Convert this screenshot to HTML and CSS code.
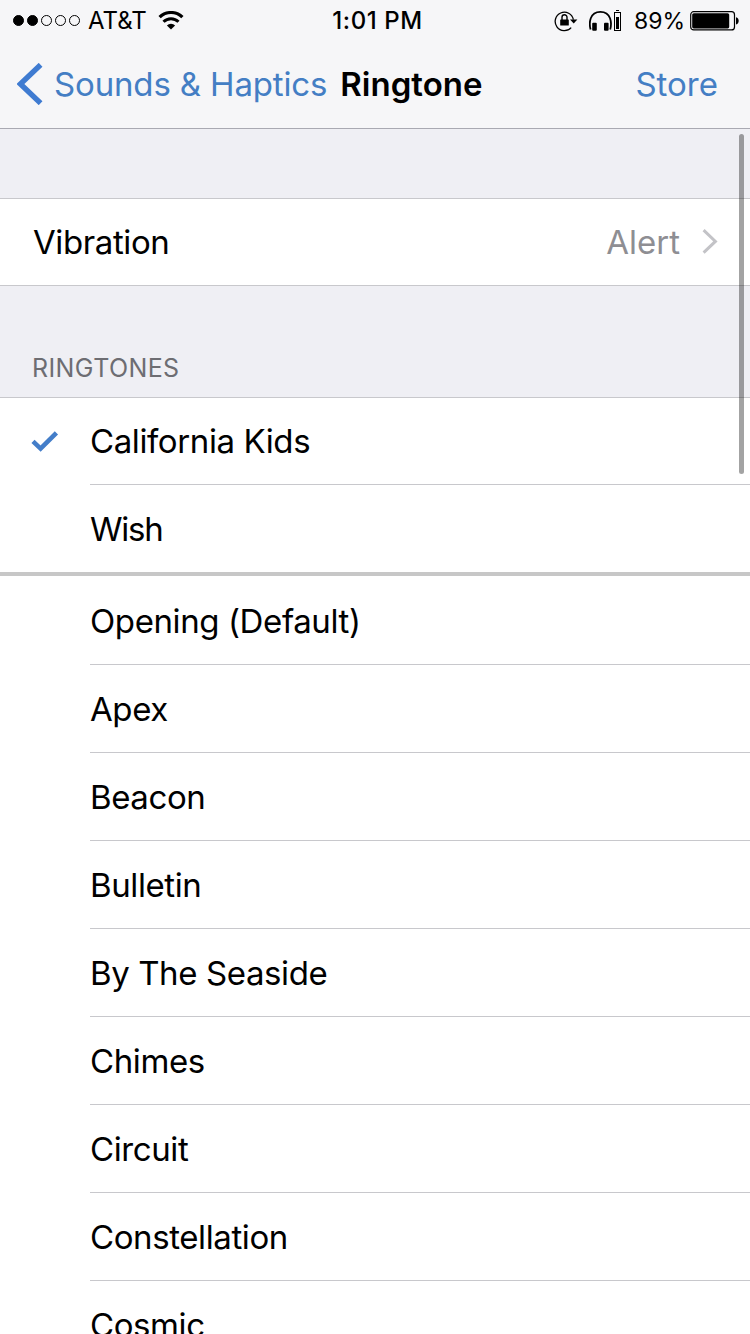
FILE: index.html
```html
<!DOCTYPE html>
<html lang="en">
<head>
  <meta charset="UTF-8">
  <meta name="viewport" content="width=device-width, initial-scale=1.0">
  <title>Ringtone</title>
  <link rel="stylesheet" href="styles.css">
</head>
<body>

  <header class="header">
    <div class="status-bar">
      <div class="status-left">
        <div class="signal">
          <span class="dot full"></span>
          <span class="dot full"></span>
          <span class="dot"></span>
          <span class="dot"></span>
          <span class="dot"></span>
        </div>
        <span class="carrier">AT&amp;T</span>
        <svg class="wifi" width="26" height="20" viewBox="0 0 26 20">
          <path d="M1.6 6.2 A16.2 16.2 0 0 1 24.4 6.2" fill="none" stroke="#000" stroke-width="3.2"/>
          <path d="M5.5 10.8 A10.6 10.6 0 0 1 20.5 10.8" fill="none" stroke="#000" stroke-width="3"/>
          <path d="M13 18.6 L8.9 14.5 A5.8 5.8 0 0 1 17.1 14.5 Z"/>
        </svg>
      </div>
      <span class="time">1:01 PM</span>
      <div class="status-right">
        <svg class="lock" width="24" height="22" viewBox="0 0 24 22">
          <path d="M17.2 17.6 A9.2 9.2 0 1 1 19.4 9.6" fill="none" stroke="#000" stroke-width="1.3"/>
          <path d="M16 9.4 H23.4 L19.7 13.4 Z"/>
          <rect x="6.2" y="9.4" width="8.6" height="6.2" rx="0.6"/>
          <path d="M8 10 V7.2 A2.5 2.5 0 0 1 13 7.2 V10" fill="none" stroke="#000" stroke-width="1.4"/>
        </svg>
        <svg class="headphones" width="34" height="22" viewBox="0 0 34 22">
          <path d="M1.6 19.5 C-0.2 13 0.6 1.8 11.4 1.8 C22.2 1.8 23 13 21.2 19.5" fill="none" stroke="#000" stroke-width="1.8"/>
          <rect x="3.2" y="12.8" width="4.6" height="8" rx="1"/>
          <rect x="15" y="12.8" width="4.6" height="8" rx="1"/>
          <rect x="25.5" y="2.5" width="6" height="18" fill="none" stroke="#000"/>
          <rect x="27" y="0" width="3" height="1"/>
          <rect x="27" y="7" width="3" height="12"/>
        </svg>
        <span class="percent">89%</span>
        <svg class="battery" width="50" height="20" viewBox="0 0 50 20">
          <rect x="0.7" y="0.7" width="43.8" height="18.2" rx="3" fill="none" stroke="#000" stroke-width="1.2"/>
          <rect x="2.2" y="2.2" width="37" height="15.2" rx="1.6"/>
          <path d="M46 6.2 C49.6 6.8 49.6 12.8 46 13.4 Z"/>
        </svg>
      </div>
    </div>

    <nav class="nav-bar">
      <a href="#" class="back">
        <svg width="26" height="42" viewBox="0 0 26 42">
          <path d="M23.6 1.8 L3.4 21 L23.6 40.2" fill="none" stroke="#3f7bd1" stroke-width="5.4"/>
        </svg>
        <span class="back-label">Sounds &amp; Haptics</span>
      </a>
      <h1 class="title">Ringtone</h1>
      <a href="#" class="store">Store</a>
    </nav>
  </header>

  <main class="settings">
    <div class="row-link">
      <span class="vibration">Vibration</span>
      <span class="value">Alert</span>
      <svg width="16" height="26" viewBox="0 0 16 26">
        <path d="M1.6 1.2 L13.4 12.4 L1.6 23.6" fill="none" stroke="#c3c3c7" stroke-width="3"/>
      </svg>
    </div>

    <h2 class="section-title">RINGTONES</h2>

    <ul class="list purchased">
      <li class="item">
        <svg class="check" width="28" height="22" viewBox="0 0 28 22">
          <path d="M2 10.4 L9.6 17.6 L25.4 1.8" fill="none" stroke="#447ec9" stroke-width="4.6"/>
        </svg>
        <span class="name">California Kids</span>
      </li>
      <li class="item"><span class="name wish">Wish</span></li>
    </ul>

    <ul class="list">
      <li class="item"><span class="name">Opening (Default)</span></li>
      <li class="item"><span class="name">Apex</span></li>
      <li class="item"><span class="name">Beacon</span></li>
      <li class="item"><span class="name">Bulletin</span></li>
      <li class="item"><span class="name">By The Seaside</span></li>
      <li class="item"><span class="name">Chimes</span></li>
      <li class="item"><span class="name">Circuit</span></li>
      <li class="item"><span class="name">Constellation</span></li>
      <li class="item"><span class="name">Cosmic</span></li>
    </ul>
  </main>

  <div class="scrollbar"></div>

</body>
</html>
```

FILE: styles.css
```css
* {
  box-sizing: border-box;
}

body {
  margin: 0;
  height: 1334px;
  overflow: hidden;
  position: relative;
  font-family: Inter, "Liberation Sans", sans-serif;
  font-size: 33px;
  color: #000;
  background-color: #efeff4;
}

a {
  text-decoration: none;
  color: #447ec4;
}

/* Header */
.header {
  height: 129px;
  background-color: #f6f6f8;
  border-bottom: 1px solid #a9a9b2;
}

.status-bar {
  display: grid;
  grid-template-columns: 1fr auto 1fr;
  align-items: center;
  height: 40px;
  padding: 1px 10px 0 13px;
  font-size: 23px;
}

.status-left,
.status-right,
.signal {
  display: flex;
  align-items: center;
}

.signal {
  gap: 3px;
}

.dot {
  width: 11px;
  height: 11px;
  border: 1px solid #000;
  border-radius: 50%;
}

.dot.full {
  background-color: #000;
}

.carrier {
  margin-left: 8px;
  font-size: 24px;
}

.wifi {
  margin-left: 11px;
}

.time {
  margin-left: 2px;
  font-size: 24px;
  font-weight: 500;
  letter-spacing: 0.6px;
}

.status-right {
  justify-content: flex-end;
}

.headphones {
  margin-left: 11px;
}

.percent {
  margin-left: 11px;
}

.battery {
  margin-left: 5px;
}

/* Navigation bar */
.nav-bar {
  display: flex;
  align-items: center;
  height: 88px;
  padding: 0 32px 0 17px;
}

.back {
  display: flex;
  align-items: center;
}

.back-label {
  margin-left: 11px;
  letter-spacing: -0.15px;
}

.title {
  margin: 0 0 0 13px;
  font-size: 33px;
  font-weight: 600;
}

.store {
  margin-left: auto;
}

/* Settings rows */
.row-link {
  display: flex;
  align-items: center;
  height: 88px;
  margin-top: 69px;
  padding: 0 32px 0 33px;
  background-color: #fff;
  border-top: 1px solid #c8c8cc;
  border-bottom: 1px solid #c8c8cc;
}

.vibration {
  letter-spacing: -0.4px;
}

.value {
  margin-left: auto;
  margin-right: 22px;
  color: #8e8e93;
}

.section-title {
  height: 111px;
  margin: 0;
  padding: 66px 32px 0;
  font-size: 25px;
  font-weight: 400;
  line-height: 32px;
  letter-spacing: 0.4px;
  color: #6d6d72;
}

/* Ringtone lists */
.list {
  margin: 0;
  padding: 0;
  list-style: none;
  background-color: #fff;
}

.purchased {
  border-top: 1px solid #c8c8cc;
  border-bottom: 4px solid #c7c7c7;
}

.item {
  display: grid;
  grid-template-columns: 90px 1fr;
  height: 88px;
}

.purchased .item {
  height: 87px;
}

.list:last-child .item:first-child {
  height: 89px;
}

.check {
  align-self: center;
  margin-left: 31px;
}

.name {
  grid-column: 2;
  display: flex;
  align-items: center;
  border-bottom: 1px solid #c8c8cc;
  letter-spacing: -0.4px;
}

.name.wish {
  letter-spacing: -1.2px;
}

.purchased .item:last-child .name {
  border-bottom: none;
}

.list:last-child .item:first-child .name {
  padding-top: 2px;
}

/* Scroll indicator lies over the page */
.scrollbar {
  position: absolute;
  top: 134px;
  right: 6px;
  width: 5px;
  height: 340px;
  border-radius: 3px;
  background-color: rgba(0, 0, 0, 0.36);
}
```
